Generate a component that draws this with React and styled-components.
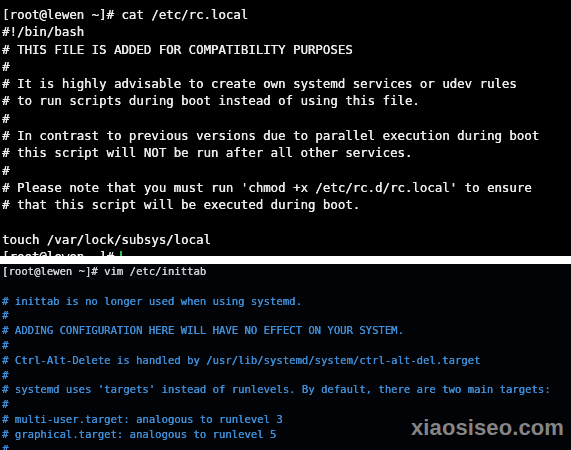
import React from "react";
import styled, { createGlobalStyle } from "styled-components";

const GlobalStyle = createGlobalStyle`
  html, body {
    margin: 0;
    padding: 0;
    background: #ffffff;
  }
  body {
    width: 571px;
    height: 450px;
    overflow: hidden;
  }
`;

const rcLocal = [
  "[root@lewen ~]# cat /etc/rc.local",
  "#!/bin/bash",
  "# THIS FILE IS ADDED FOR COMPATIBILITY PURPOSES",
  "#",
  "# It is highly advisable to create own systemd services or udev rules",
  "# to run scripts during boot instead of using this file.",
  "#",
  "# In contrast to previous versions due to parallel execution during boot",
  "# this script will NOT be run after all other services.",
  "#",
  "# Please note that you must run 'chmod +x /etc/rc.d/rc.local' to ensure",
  "# that this script will be executed during boot.",
  "",
  "touch /var/lock/subsys/local",
];

const inittab = [
  "",
  "# inittab is no longer used when using systemd.",
  "#",
  "# ADDING CONFIGURATION HERE WILL HAVE NO EFFECT ON YOUR SYSTEM.",
  "#",
  "# Ctrl-Alt-Delete is handled by /usr/lib/systemd/system/ctrl-alt-del.target",
  "#",
  "# systemd uses 'targets' instead of runlevels. By default, there are two main targets:",
  "#",
  "# multi-user.target: analogous to runlevel 3",
  "# graphical.target: analogous to runlevel 5",
  "#",
];

const Page = styled.div`
  display: flex;
  flex-direction: column;
  gap: 8px;
  width: 571px;
  height: 450px;
  position: relative;
  background: #ffffff;
`;

// terminal window crop; the last line runs under the edge like in a screenshot
const Terminal = styled.div`
  height: ${(p) => p.$height}px;
  background: ${(p) => p.$bg};
  overflow: hidden;
  padding: ${(p) => p.$pad};
  box-sizing: border-box;
  font-family: "DejaVu Sans Mono", "Liberation Mono", monospace;
  font-size: ${(p) => p.$size}px;
  line-height: ${(p) => p.$lh}px;
  filter: blur(0.25px);
`;

const Line = styled.div`
  white-space: pre;
  min-height: ${(p) => p.$lh}px;
  color: ${(p) => p.$color};
  text-shadow: 0.3px 0 0 ${(p) => p.$color};
`;

const Cursor = styled.span`
  display: inline-block;
  width: 2px;
  height: 12px;
  margin-left: 6px;
  vertical-align: -2px;
  background: #2fbf4a;
`;

const Watermark = styled.div`
  position: absolute;
  left: 411px;
  top: 415px;
  font-family: "Liberation Sans", Arial, sans-serif;
  font-weight: 700;
  font-size: 22px;
  letter-spacing: 0.1px;
  color: #858585;
  text-shadow: 0 0 2px rgba(0, 0, 0, 0.6);
`;

export default function App() {
  return (
    <>
      <GlobalStyle />
      <Page>
        <Terminal $height={256} $bg="#000000" $pad="6px 0 0 2px" $size={12.4} $lh={17.3}>
          {rcLocal.map((l, i) => (
            <Line key={i} $lh={17.3} $color="#ececec">
              {l}
            </Line>
          ))}
          <Line $lh={17.3} $color="#ececec">
            [root@lewen ~]#<Cursor />
          </Line>
        </Terminal>
        <Terminal $height={186} $bg="#020306" $pad="0 0 0 2px" $size={10.6} $lh={14.8}>
          <Line $lh={14.8} $color="#cfd3d8">
            [root@lewen ~]# vim /etc/inittab
          </Line>
          {inittab.map((l, i) => (
            <Line key={i} $lh={14.8} $color="#3f8fd8">
              {l}
            </Line>
          ))}
        </Terminal>
        <Watermark>xiaosiseo.com</Watermark>
      </Page>
    </>
  );
}
